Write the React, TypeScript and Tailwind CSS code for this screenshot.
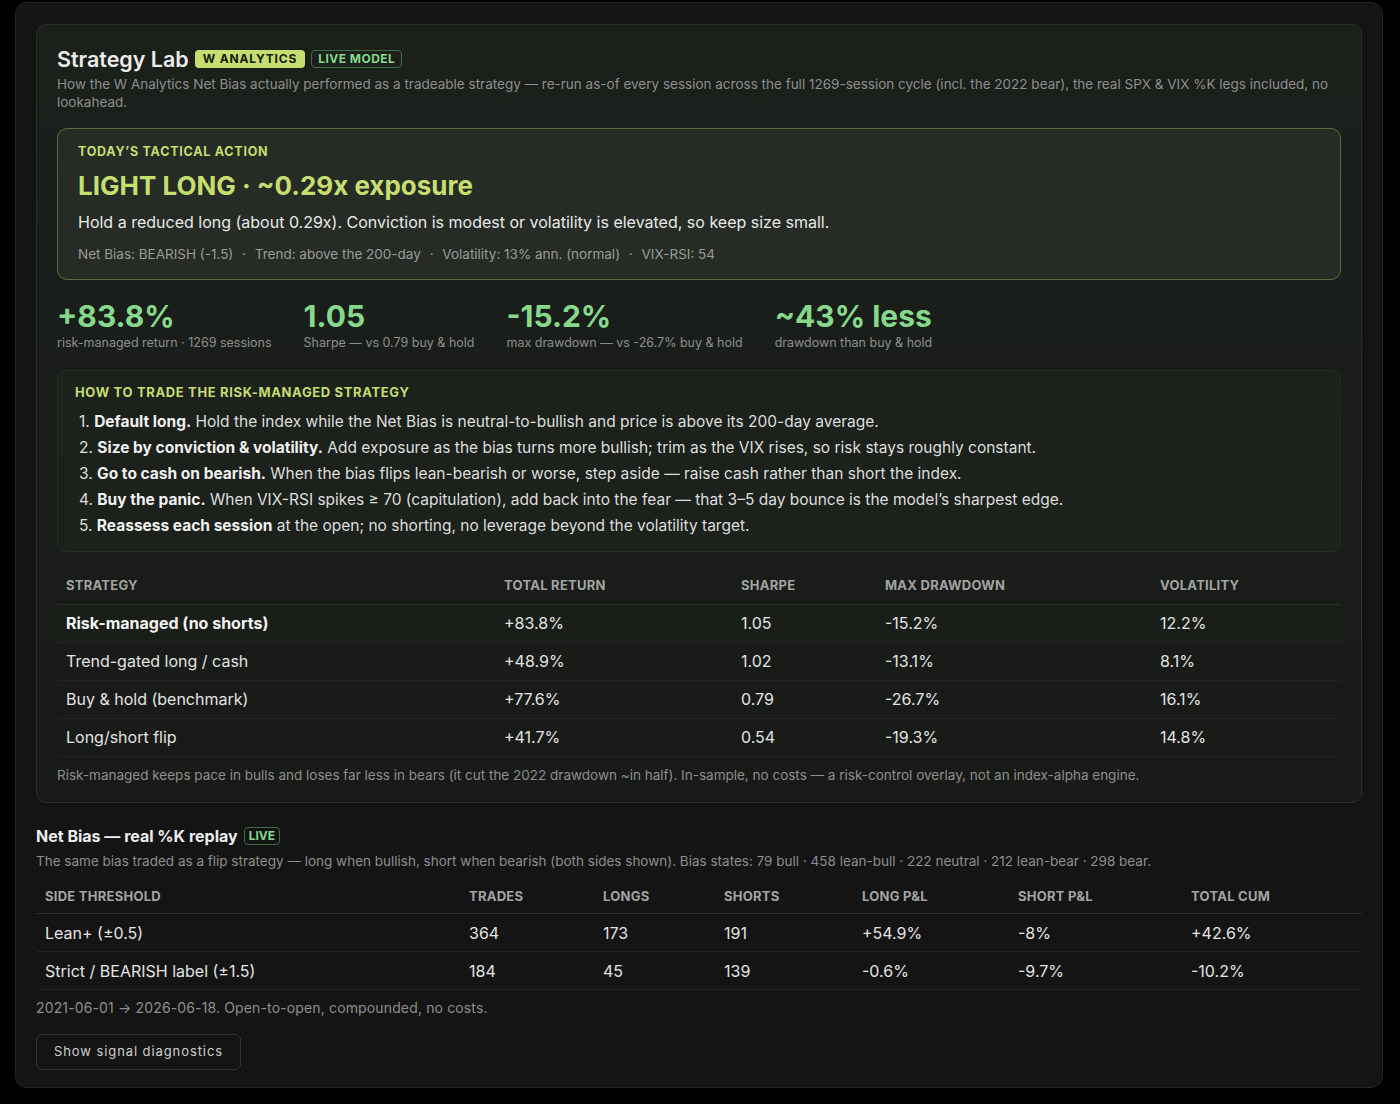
import React from 'react';

const font = { fontFamily: 'Inter, "Noto Sans", sans-serif' };

const stats = [
    { value: '+83.8%', label: 'risk-managed return · 1269 sessions' },
    { value: '1.05', label: 'Sharpe — vs 0.79 buy & hold' },
    { value: '-15.2%', label: 'max drawdown — vs -26.7% buy & hold' },
    { value: '~43% less', label: 'drawdown than buy & hold' },
];

const steps: { lead: string; rest: string }[] = [
    { lead: 'Default long.', rest: ' Hold the index while the Net Bias is neutral-to-bullish and price is above its 200-day average.' },
    { lead: 'Size by conviction & volatility.', rest: ' Add exposure as the bias turns more bullish; trim as the VIX rises, so risk stays roughly constant.' },
    { lead: 'Go to cash on bearish.', rest: ' When the bias flips lean-bearish or worse, step aside — raise cash rather than short the index.' },
    { lead: 'Buy the panic.', rest: ' When VIX-RSI spikes ≥ 70 (capitulation), add back into the fear — that 3–5 day bounce is the model’s sharpest edge.' },
    { lead: 'Reassess each session', rest: ' at the open; no shorting, no leverage beyond the volatility target.' },
];

const strategyRows = [
    ['Risk-managed (no shorts)', '+83.8%', '1.05', '-15.2%', '12.2%'],
    ['Trend-gated long / cash', '+48.9%', '1.02', '-13.1%', '8.1%'],
    ['Buy & hold (benchmark)', '+77.6%', '0.79', '-26.7%', '16.1%'],
    ['Long/short flip', '+41.7%', '0.54', '-19.3%', '14.8%'],
];

const replayRows = [
    ['Lean+ (±0.5)', '364', '173', '191', '+54.9%', '-8%', '+42.6%'],
    ['Strict / BEARISH label (±1.5)', '184', '45', '139', '-0.6%', '-9.7%', '-10.2%'],
];

export default function App() {
    return (
        <div className="min-h-[1104px] bg-black pt-[2px] pl-[15px]" style={font}>
            <div className="w-[1368px] rounded-xl border border-[#242424] bg-[#141414] px-5 pt-[21px] pb-[17px]">
                {/* Strategy Lab card */}
                <section className="rounded-[10px] border border-[#283024] bg-gradient-to-b from-[#1b201b] to-[#181a18] px-5 pt-5 pb-[17px]">
                    <div className="flex items-center gap-[6px]">
                        <h2 className="text-[21.5px] font-semibold leading-7 text-[#ececec]">Strategy Lab</h2>
                        <span className="rounded-[4px] bg-[#c6dd70] px-[8px] py-[1px] text-[12px] font-bold leading-4 tracking-[0.07em] text-[#141a0c]">W ANALYTICS</span>
                        <span className="rounded-[4px] border border-[#3f6b45] px-[6px] text-[12px] font-bold leading-4 tracking-[0.04em] text-[#86d98a]">LIVE MODEL</span>
                    </div>
                    <p className="mt-[2px] text-[13.5px] leading-[18px] text-[#8e8e8e]">
                        How the W Analytics Net Bias actually performed as a tradeable strategy — re-run as-of every session across the full 1269-session cycle (incl. the 2022 bear), the real SPX &amp; VIX %K legs included, no lookahead.
                    </p>

                    {/* Tactical action */}
                    <div className="mt-[17px] rounded-[10px] border border-[#5c6b3c] bg-[#262c25] px-5 pt-[15px] pb-[15px]">
                        <p className="text-[12.5px] font-bold leading-4 tracking-[0.06em] text-[#c6dd70]">TODAY’S TACTICAL ACTION</p>
                        <p className="mt-[10px] text-[26px] font-bold leading-8 text-[#c6dd70]">LIGHT LONG · ~0.29x exposure</p>
                        <p className="mt-[8px] text-[16px] leading-6 text-[#e8e8e8]">Hold a reduced long (about 0.29x). Conviction is modest or volatility is elevated, so keep size small.</p>
                        <p className="mt-[10px] text-[13.5px] leading-5 text-[#9a9a9a]">
                            Net Bias: BEARISH (-1.5) <span className="mx-[5px]">·</span> Trend: above the 200-day <span className="mx-[5px]">·</span> Volatility: 13% ann. (normal) <span className="mx-[5px]">·</span> VIX-RSI: 54
                        </p>
                    </div>

                    {/* Stats */}
                    <div className="mt-[20px] flex gap-8">
                        {stats.map((s) => (
                            <div key={s.value}>
                                <div className="text-[30px] font-bold leading-8 text-[#86d98a]">{s.value}</div>
                                <div className="mt-[3px] text-[12.5px] leading-4 text-[#8e8e8e]">{s.label}</div>
                            </div>
                        ))}
                    </div>

                    {/* How to trade */}
                    <div className="mt-[19px] rounded-lg border border-[#252c24] bg-[#1c211c] px-[17px] pt-[13px] pb-[12px]">
                        <p className="text-[13px] font-bold leading-4 tracking-[0.05em] text-[#c6dd70]">HOW TO TRADE THE RISK-MANAGED STRATEGY</p>
                        <ol className="mt-[9px] pl-[4px] text-[15.5px] leading-[26px] text-[#dedede]">
                            {steps.map((s, i) => (
                                <li key={i}>
                                    {i + 1}. <b className="font-bold text-[#f0f0f0]">{s.lead}</b>{s.rest}
                                </li>
                            ))}
                        </ol>
                    </div>

                    {/* Strategy table */}
                    <table className="mt-[16px] w-full border-collapse text-left">
                        <thead>
                            <tr className="border-b border-[#2a2a2a] text-[13px] font-bold tracking-[0.02em] text-[#a3a3a3]">
                                <th className="w-[447px] py-[8px] pl-[9px] font-bold">STRATEGY</th>
                                <th className="w-[237px] py-[8px] font-bold">TOTAL RETURN</th>
                                <th className="w-[144px] py-[8px] font-bold">SHARPE</th>
                                <th className="w-[275px] py-[8px] font-bold">MAX DRAWDOWN</th>
                                <th className="py-[8px] font-bold">VOLATILITY</th>
                            </tr>
                        </thead>
                        <tbody className="text-[16px] text-[#e3e3e3]">
                            {strategyRows.map((r, i) => (
                                <tr key={r[0]} className={i === 0 ? 'border-b border-[#232323] bg-[#1a1e18]' : 'border-b border-[#232323]'}>
                                    {r.map((c, j) => (
                                        <td key={j} className={`h-[38px] ${j === 0 ? 'pl-[9px]' : ''} ${i === 0 && j === 0 ? 'font-bold text-[#f2f2f2]' : ''}`}>{c}</td>
                                    ))}
                                </tr>
                            ))}
                        </tbody>
                    </table>
                    <p className="mt-[8px] text-[13.5px] leading-5 text-[#8e8e8e]">
                        Risk-managed keeps pace in bulls and loses far less in bears (it cut the 2022 drawdown ~in half). In-sample, no costs — a risk-control overlay, not an index-alpha engine.
                    </p>
                </section>

                {/* Net Bias replay */}
                <div className="mt-[21px] flex items-center gap-[6px]">
                    <h3 className="text-[16px] font-bold leading-6 text-[#ececec]">Net Bias — real %K replay</h3>
                    <span className="rounded-[4px] border border-[#3f6b45] px-[4px] text-[12px] font-bold leading-4 text-[#86d98a]">LIVE</span>
                </div>
                <p className="mt-[3px] text-[13.5px] leading-5 text-[#8e8e8e]">
                    The same bias traded as a flip strategy — long when bullish, short when bearish (both sides shown). Bias states: 79 bull · 458 lean-bull · 222 neutral · 212 lean-bear · 298 bear.
                </p>
                <table className="mt-[9px] w-full border-collapse text-left">
                    <thead>
                        <tr className="border-b border-[#2a2a2a] text-[13px] font-bold tracking-[0.02em] text-[#a3a3a3]">
                            <th className="w-[433px] py-[7px] pl-[9px] font-bold">SIDE THRESHOLD</th>
                            <th className="w-[134px] py-[7px] font-bold">TRADES</th>
                            <th className="w-[121px] py-[7px] font-bold">LONGS</th>
                            <th className="w-[138px] py-[7px] font-bold">SHORTS</th>
                            <th className="w-[156px] py-[7px] font-bold">LONG P&amp;L</th>
                            <th className="w-[173px] py-[7px] font-bold">SHORT P&amp;L</th>
                            <th className="py-[7px] font-bold">TOTAL CUM</th>
                        </tr>
                    </thead>
                    <tbody className="text-[16px] text-[#e3e3e3]">
                        {replayRows.map((r) => (
                            <tr key={r[0]} className="border-b border-[#232323]">
                                {r.map((c, j) => (
                                    <td key={j} className={`h-[38px] ${j === 0 ? 'pl-[9px]' : ''}`}>{c}</td>
                                ))}
                            </tr>
                        ))}
                    </tbody>
                </table>
                <p className="mt-[8px] text-[14px] leading-5 tracking-[0.01em] text-[#8e8e8e]">2021-06-01 → 2026-06-18. Open-to-open, compounded, no costs.</p>
                <button className="mt-[16px] h-[36px] rounded-md border border-[#333] px-[17px] text-[13px] tracking-[0.07em] text-[#cfcfcf]">
                    Show signal diagnostics
                </button>
            </div>
        </div>
    );
}
